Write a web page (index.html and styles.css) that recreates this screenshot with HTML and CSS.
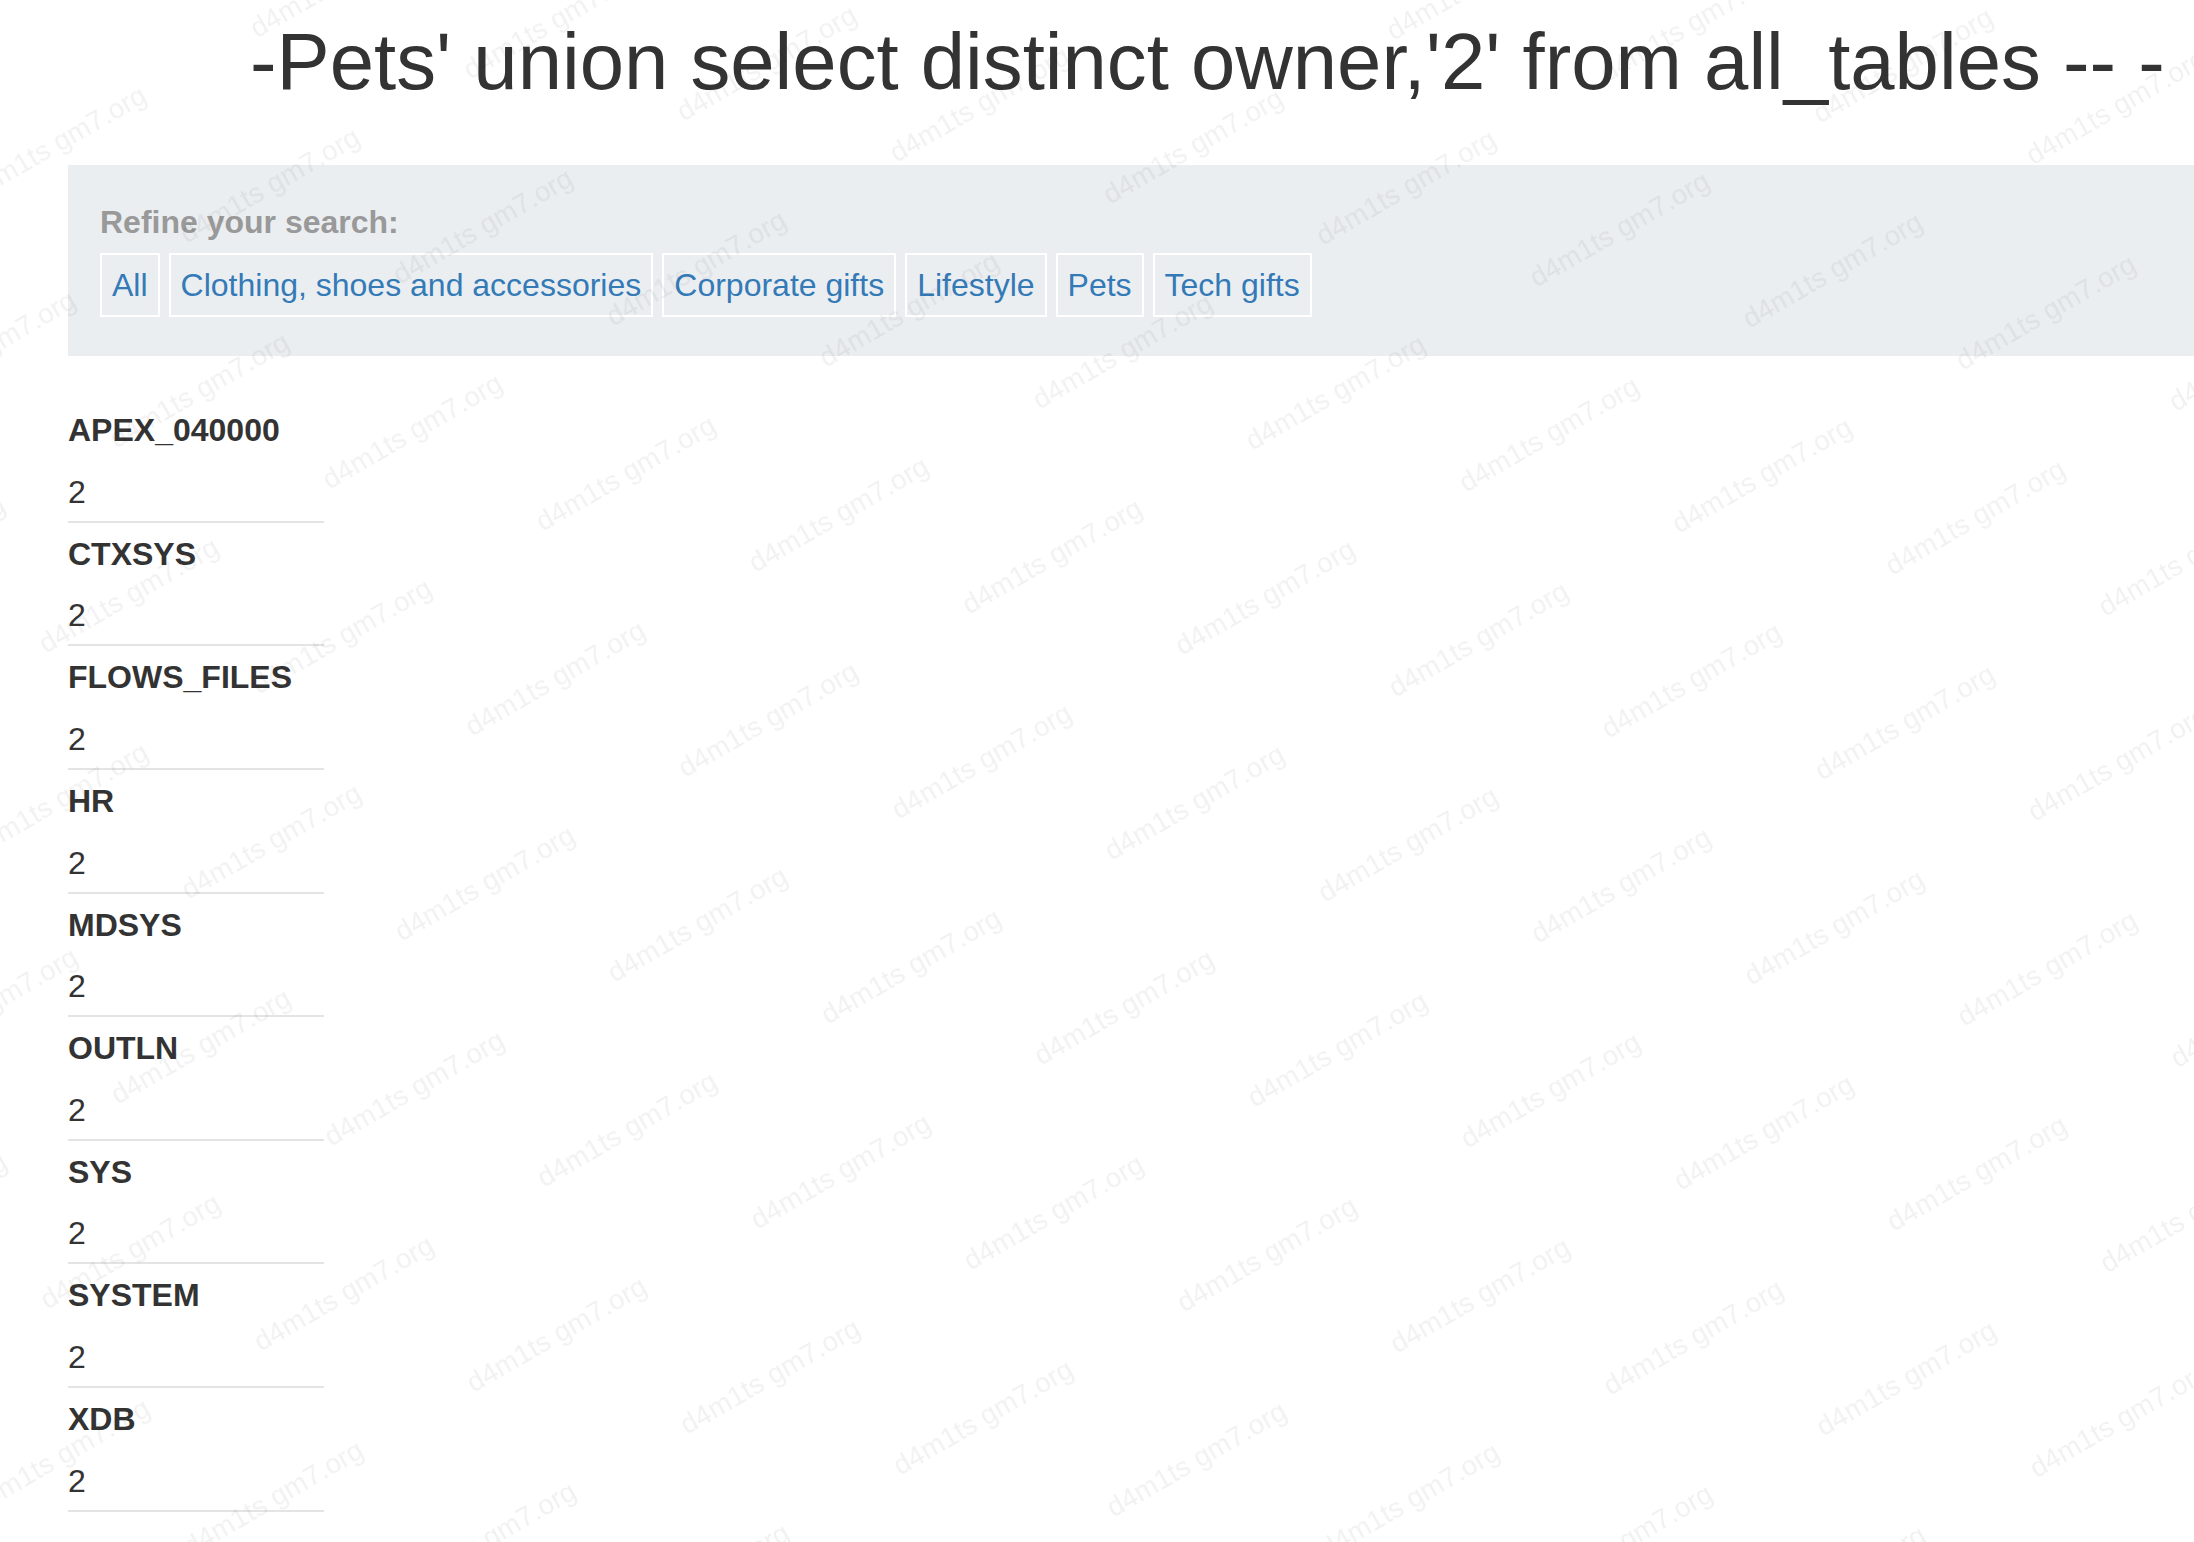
FILE: index.html
```html
<!DOCTYPE html>
<html lang="en">
<head>
<meta charset="utf-8">
<title>Pets</title>
<link rel="stylesheet" href="styles.css">
</head>
<body>
<div class="page">
  <h1 class="title">-Pets' union select distinct owner,'2' from all_tables -- -</h1>
  <section class="filters">
    <div class="filters-label">Refine your search:</div>
    <div class="filters-list">
      <a class="filter" href="#">All</a>
      <a class="filter" href="#">Clothing, shoes and accessories</a>
      <a class="filter" href="#">Corporate gifts</a>
      <a class="filter" href="#">Lifestyle</a>
      <a class="filter" href="#">Pets</a>
      <a class="filter" href="#">Tech gifts</a>
    </div>
  </section>
  <dl class="results">
    <div class="result"><dt>APEX_040000</dt><dd>2</dd></div>
    <div class="result"><dt>CTXSYS</dt><dd>2</dd></div>
    <div class="result"><dt>FLOWS_FILES</dt><dd>2</dd></div>
    <div class="result"><dt>HR</dt><dd>2</dd></div>
    <div class="result"><dt>MDSYS</dt><dd>2</dd></div>
    <div class="result"><dt>OUTLN</dt><dd>2</dd></div>
    <div class="result"><dt>SYS</dt><dd>2</dd></div>
    <div class="result"><dt>SYSTEM</dt><dd>2</dd></div>
    <div class="result"><dt>XDB</dt><dd>2</dd></div>
  </dl>
</div>
<svg class="watermark" id="wm" xmlns="http://www.w3.org/2000/svg" aria-hidden="true"></svg>
<script src="script.js"></script>
</body>
</html>
```

FILE: styles.css
```css
html, body {
  margin: 0;
  padding: 0;
  background: #ffffff;
}

body {
  font-family: "Liberation Sans", Arial, sans-serif;
  font-size: 32px;
  line-height: 48px;
  color: #333333;
  overflow: hidden;
  min-height: 1542px;
}

.page {
  padding-left: 68px;
}

.title {
  margin: 0 0 55px 0;
  padding: 14px 0 0 182px;
  font-size: 79.7px;
  line-height: 96px;
  font-weight: 400;
  white-space: nowrap;
  color: #333333;
}

.filters {
  background: #ebeef1;
  padding: 33px 32px 39px 32px;
}

.filters-label {
  font-weight: 700;
  color: #999999;
}

.filters-list {
  display: flex;
  flex-wrap: wrap;
  gap: 9px;
  margin-top: 7px;
}

.filter {
  display: block;
  border: 2px solid #ffffff;
  padding: 6px 10px;
  color: #337ab7;
  text-decoration: none;
  white-space: nowrap;
}

.results {
  margin: 43px 0 0 0;
  width: 256px;
}

.result {
  padding: 7px 0 5px 0;
  border-bottom: 2px solid #e4e4e4;
  height: 109.65px;
}

.result dt {
  font-weight: 700;
}

.result dd {
  margin: 13.65px 0 0 0;
}

.watermark {
  position: fixed;
  top: 0;
  left: 0;
  width: 100vw;
  height: 100vh;
  pointer-events: none;
}

.watermark text {
  font-family: "Liberation Sans", Arial, sans-serif;
  font-size: 28px;
  fill: #000000;
  fill-opacity: 0.055;
}
```

FILE: script.js
```js
(function () {
  var svg = document.getElementById('wm');
  var ns = 'http://www.w3.org/2000/svg';
  var ox = 1182, oy = 656;
  var ax = 213.2, ay = 41.5;
  var bx = -70.5, by = 205;
  for (var j = -10; j <= 14; j++) {
    for (var i = -16; i <= 16; i++) {
      var x = ox + i * ax + j * bx;
      var y = oy + i * ay + j * by;
      if (x < -320 || x > 2300 || y < -40 || y > 1760) continue;
      var t = document.createElementNS(ns, 'text');
      var xs = x.toFixed(1), ys = y.toFixed(1);
      t.setAttribute('x', xs);
      t.setAttribute('y', ys);
      t.setAttribute('transform', 'rotate(-30 ' + xs + ' ' + ys + ')');
      t.textContent = 'd4m1ts gm7.org';
      svg.appendChild(t);
    }
  }
})();
```
